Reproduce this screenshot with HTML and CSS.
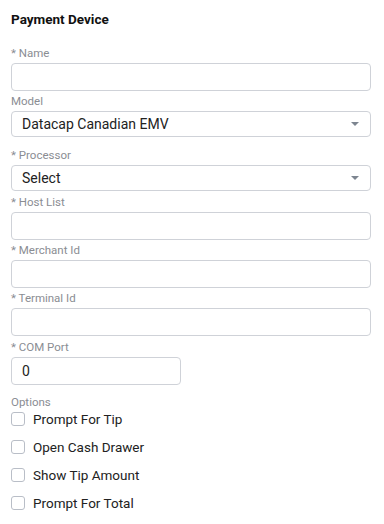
FILE: index.html
```html
<html>
    <head>
        <link rel="stylesheet" href="styles.css">
        <meta name="viewport" content="width=device-width, initial-scale=1.0">
        <title>Payment Device</title>
    </head>
    <body>
        <h1 class="title">Payment Device</h1>
        <form class="deviceForm">
            <div class="field">
                <label class="fieldLabel">* Name</label>
                <input class="textInput" type="text" />
            </div>
            <div class="field field-wide">
                <label class="fieldLabel">Model</label>
                <div class="selectBox">
                    <span class="selectValue">Datacap Canadian EMV</span>
                    <span class="caret"></span>
                </div>
            </div>
            <div class="field field-loose">
                <label class="fieldLabel">* Processor</label>
                <div class="selectBox">
                    <span class="selectValue">Select</span>
                    <span class="caret"></span>
                </div>
            </div>
            <div class="field">
                <label class="fieldLabel">* Host List</label>
                <input class="textInput" type="text" />
            </div>
            <div class="field">
                <label class="fieldLabel">* Merchant Id</label>
                <input class="textInput" type="text" />
            </div>
            <div class="field field-loose">
                <label class="fieldLabel">* Terminal Id</label>
                <input class="textInput" type="text" />
            </div>
            <div class="field field-port">
                <label class="fieldLabel">* COM Port</label>
                <input class="textInput short" type="text" value="0" />
            </div>
            <div class="options">
                <div class="fieldLabel">Options</div>
                <label class="check"><span class="box"></span>Prompt For Tip</label>
                <label class="check"><span class="box"></span>Open Cash Drawer</label>
                <label class="check"><span class="box"></span>Show Tip Amount</label>
                <label class="check"><span class="box"></span>Prompt For Total</label>
            </div>
        </form>
    </body>
</html>
```

FILE: styles.css
```css
html, body { margin: 0; padding: 0; background: #fff; }
body { font-family: Roboto, "Liberation Sans", sans-serif; padding: 11px 13px 0 11px; color: #222; }

.title { font-size: 13.5px; line-height: 16px; font-weight: bold; color: #111; margin: 0 0 20px 0; }

.field { margin-bottom: 4px; }
.field-loose { margin-bottom: 5px; }
.field-wide { margin-bottom: 12px; }
.field-port { margin-bottom: 11px; }

.fieldLabel {
    display: block;
    font-size: 11.5px;
    line-height: 12px;
    color: #8a8d93;
    margin-bottom: 4px;
}

.textInput {
    display: block;
    box-sizing: border-box;
    width: 100%;
    height: 28px;
    margin: 0;
    padding: 0 10px;
    border: 1px solid #cfd2d8;
    border-radius: 4px;
    font-family: Roboto, "Liberation Sans", sans-serif;
    font-size: 14px;
    color: #222;
    background: #fff;
    outline: none;
}
.textInput.short { width: 170px; }

.selectBox {
    box-sizing: border-box;
    height: 26px;
    border: 1px solid #cfd2d8;
    border-radius: 4px;
    padding: 0 10px 0 10px;
    display: flex;
    align-items: center;
    justify-content: space-between;
}
.selectValue { font-size: 14px; color: #222; }
.caret {
    width: 0;
    height: 0;
    margin-right: 1px;
    border-left: 4px solid transparent;
    border-right: 4px solid transparent;
    border-top: 4px solid #7d8590;
}

.options .fieldLabel { margin-bottom: -3px; }
.check {
    display: flex;
    align-items: center;
    height: 28px;
    font-size: 13.5px;
    color: #222;
}
.check .box {
    box-sizing: border-box;
    width: 14px;
    height: 14px;
    border: 1px solid #b9bec7;
    border-radius: 3px;
    margin-right: 8px;
}
```
